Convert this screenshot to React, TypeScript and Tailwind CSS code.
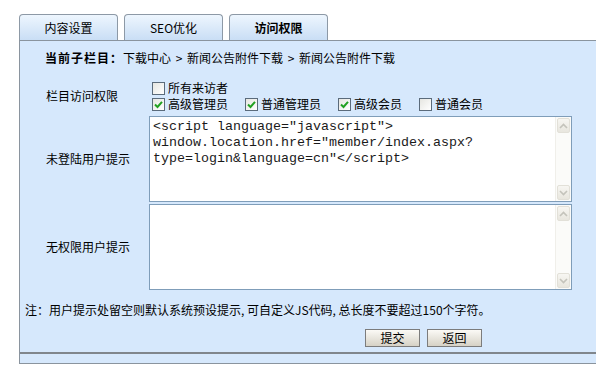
import React from 'react';

const tabs = [
    { label: '内容设置', active: false },
    { label: 'SEO优化', active: false },
    { label: '访问权限', active: true },
];

const roles = [
    { label: '高级管理员', checked: true },
    { label: '普通管理员', checked: true },
    { label: '高级会员', checked: true },
    { label: '普通会员', checked: false },
];

const crumbs = ['下载中心', '新闻公告附件下载', '新闻公告附件下载'];

function CheckBox({ checked }: { checked: boolean }) {
    return (
        <span className="w-[13px] h-[13px] border border-[#5b6b7b] bg-gradient-to-br from-[#e6e6e1] to-white flex items-center justify-center shrink-0">
            {checked && (
                <svg width="9" height="9" viewBox="0 0 9 9">
                    <path d="M1 4.5 L3.5 7 L8 1.8" fill="none" stroke="#21a121" strokeWidth="2" />
                </svg>
            )}
        </span>
    );
}

function Chevron({ up }: { up: boolean }) {
    return (
        <svg width="9" height="6" viewBox="0 0 9 6">
            <path d={up ? 'M1 5 L4.5 1.5 L8 5' : 'M1 1 L4.5 4.5 L8 1'} fill="none" stroke="#c4c3bb" strokeWidth="1.6" />
        </svg>
    );
}

function ScrollBar() {
    return (
        <div className="w-[16px] h-full flex flex-col justify-between py-[1px] bg-[#fbfbf9] border-l border-[#f0efea]">
            <div className="h-[15px] mx-[1px] rounded-[2px] border border-[#e2e0d8] bg-gradient-to-b from-[#f7f6f2] to-[#e8e6de] flex items-center justify-center">
                <Chevron up />
            </div>
            <div className="h-[15px] mx-[1px] rounded-[2px] border border-[#e2e0d8] bg-gradient-to-b from-[#f7f6f2] to-[#e8e6de] flex items-center justify-center">
                <Chevron up={false} />
            </div>
        </div>
    );
}

function TextBox({ lines }: { lines: string[] }) {
    return (
        <div className="w-[423px] h-[86px] border border-[#7f9db9] bg-white flex">
            <div className="flex-1 pl-[3px] pt-[2px] font-['Liberation_Mono',monospace] text-[13.33px] leading-[16px] text-[#1a1a1a]">
                {lines.map((l) => (
                    <div key={l} className="whitespace-pre">{l}</div>
                ))}
            </div>
            <ScrollBar />
        </div>
    );
}

export default function App() {
    return (
        <div className="w-[596px] h-[383px] overflow-hidden bg-white text-[12px] text-black font-['Noto_Sans_CJK_SC',sans-serif]">
            <div className="pl-[19px] pt-[14px]">
                {/* Tabs */}
                <div className="flex gap-[6px]">
                    {tabs.map((t) => (
                        <div
                            key={t.label}
                            className={`w-[99px] h-[26px] border border-b-0 border-[#8d99a6] rounded-t-[4px] bg-gradient-to-b from-[#eef6fe] to-[#c9def5] flex items-center justify-center ${t.active ? 'font-bold' : ''}`}
                        >
                            {t.label}
                        </div>
                    ))}
                </div>

                {/* Panel */}
                <div className="w-[590px] border border-[#8a949e] bg-[#d6e8fc]">
                    <div className="border-b-2 border-[#80868c] pb-[5px]">
                        <div className="h-[34px] flex items-center pl-[25px]">
                            <span className="font-bold tracking-[1px]">当前子栏目：</span>
                            {crumbs.map((c, i) => (
                                <React.Fragment key={i}>
                                    {i > 0 && <span className="w-[16px] text-center">&gt;</span>}
                                    <span>{c}</span>
                                </React.Fragment>
                            ))}
                        </div>

                        <div className="flex items-center pt-[5px]">
                            <div className="w-[129px] pl-[26px]">栏目访问权限</div>
                            <div className="flex flex-col pl-[3px]">
                                <div className="h-[16px] flex items-center gap-[3px]">
                                    <CheckBox checked={false} />
                                    <span>所有来访者</span>
                                </div>
                                <div className="h-[16px] flex items-center gap-[17px]">
                                    {roles.map((r) => (
                                        <div key={r.label} className="flex items-center gap-[3px]">
                                            <CheckBox checked={r.checked} />
                                            <span>{r.label}</span>
                                        </div>
                                    ))}
                                </div>
                            </div>
                        </div>

                        <div className="flex items-center mt-[4px]">
                            <div className="w-[129px] pl-[26px]">未登陆用户提示</div>
                            <TextBox
                                lines={[
                                    '<script language="javascript">',
                                    'window.location.href="member/index.aspx?',
                                    'type=login&language=cn"</script>',
                                ]}
                            />
                        </div>

                        <div className="flex items-center mt-[2px]">
                            <div className="w-[129px] pl-[26px]">无权限用户提示</div>
                            <TextBox lines={[]} />
                        </div>

                        <div className="h-[20px] mt-[10px] flex items-center pl-[5px]">
                            注：用户提示处留空则默认系统预设提示, 可自定义JS代码, 总长度不要超过150个字符。
                        </div>

                        <div className="flex gap-[7px] pl-[345px] mt-[9px]">
                            <button className="w-[55px] h-[18px] border border-[#7c7c7c] bg-gradient-to-b from-[#fbfaf6] to-[#d6d2c6] flex items-center justify-center leading-none">
                                提交
                            </button>
                            <button className="w-[55px] h-[18px] border border-[#7c7c7c] bg-gradient-to-b from-[#fbfaf6] to-[#d6d2c6] flex items-center justify-center leading-none">
                                返回
                            </button>
                        </div>
                    </div>
                    <div className="h-[9px]" />
                </div>
            </div>
        </div>
    );
}
